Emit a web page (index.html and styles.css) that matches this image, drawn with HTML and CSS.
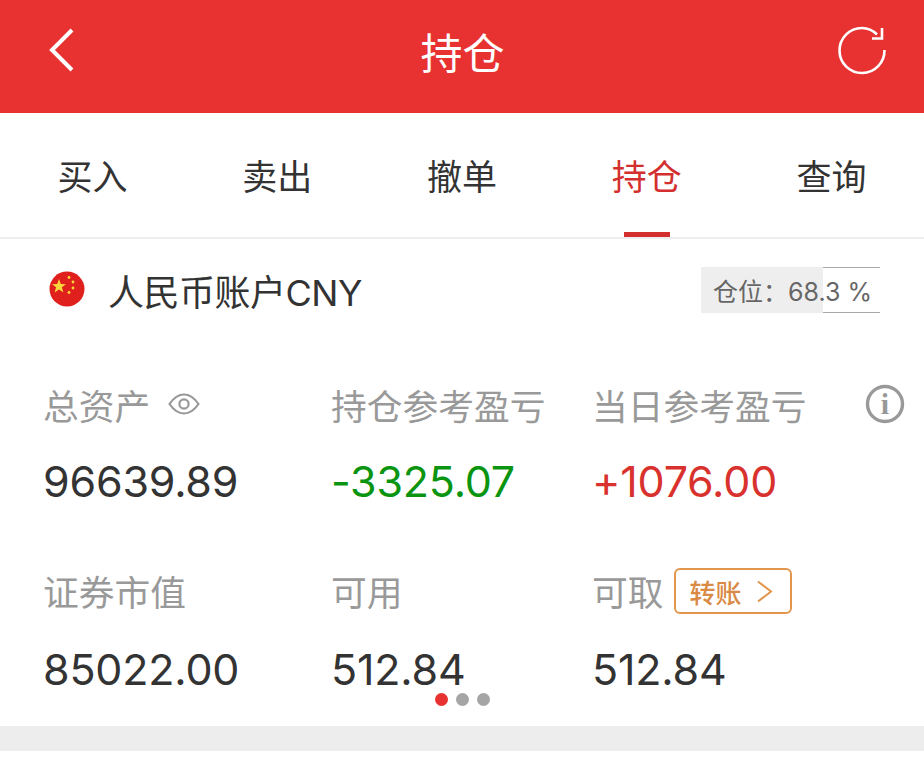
FILE: index.html
```html
<!DOCTYPE html>
<html lang="zh-CN">
<head>
    <meta charset="UTF-8">
    <meta name="viewport" content="width=device-width, initial-scale=1.0">
    <title>持仓</title>
    <link rel="stylesheet" href="styles.css">
</head>
<body>
    <header class="topbar">
        <svg class="back-icon" width="26" height="44" viewBox="0 0 26 44">
            <path d="M23 2 L3 22 L23 42" fill="none" stroke="#fff" stroke-width="4"/>
        </svg>
        <h1 class="topbar-title">持仓</h1>
        <svg class="refresh-icon" width="52" height="52" viewBox="0 0 52 52">
            <path d="M41 9.5 C37 5.5 32 3 26 3 A22.5 22.5 0 1 0 48.5 25" fill="none" stroke="#fff" stroke-width="2.6"/>
            <path d="M46 3 V13.5 H36" fill="none" stroke="#fff" stroke-width="2.6"/>
        </svg>
    </header>

    <nav class="tabs">
        <div class="tab">买入</div>
        <div class="tab">卖出</div>
        <div class="tab">撤单</div>
        <div class="tab tab-active">持仓</div>
        <div class="tab">查询</div>
    </nav>

    <main class="account">
        <div class="account-head">
            <svg class="flag" width="36" height="36" viewBox="0 0 36 36">
                <circle cx="18" cy="18" r="17.5" fill="#e0201c"/>
                <polygon points="10,8 11.8,13 17,13.2 12.9,16.3 14.4,21.4 10,18.4 5.6,21.4 7.1,16.3 3,13.2 8.2,13" fill="#fbd63c"/>
                <circle cx="20" cy="6.5" r="1.4" fill="#fbd63c"/>
                <circle cx="24" cy="11" r="1.4" fill="#fbd63c"/>
                <circle cx="24" cy="17" r="1.4" fill="#fbd63c"/>
                <circle cx="20" cy="21.5" r="1.4" fill="#fbd63c"/>
            </svg>
            <span class="account-name">人民币账户CNY</span>
            <div class="gauge">
                <div class="gauge-fill"></div>
                <span class="gauge-text">仓位：68.3 %</span>
            </div>
        </div>

        <div class="stats">
            <div class="stat">
                <div class="stat-label">总资产
                    <svg class="eye-icon" width="32" height="22" viewBox="0 0 32 22">
                        <path d="M1.5 11 C7 3 12 1.5 16 1.5 C20 1.5 25 3 30.5 11 C25 19 20 20.5 16 20.5 C12 20.5 7 19 1.5 11 Z" fill="none" stroke="#999" stroke-width="2.2"/>
                        <circle cx="16" cy="11" r="4.6" fill="none" stroke="#999" stroke-width="2.2"/>
                    </svg>
                </div>
                <div class="stat-value">96639.89</div>
            </div>
            <div class="stat">
                <div class="stat-label">持仓参考盈亏</div>
                <div class="stat-value value-down">-3325.07</div>
            </div>
            <div class="stat">
                <div class="stat-label">当日参考盈亏</div>
                <div class="stat-value value-up">+1076.00</div>
            </div>
            <div class="stat">
                <div class="stat-label">证券市值</div>
                <div class="stat-value">85022.00</div>
            </div>
            <div class="stat">
                <div class="stat-label">可用</div>
                <div class="stat-value">512.84</div>
            </div>
            <div class="stat">
                <div class="stat-label">可取
                    <span class="transfer">转账
                        <svg width="17" height="23" viewBox="0 0 17 23">
                            <path d="M2 1.5 L15 11.5 L2 21.5" fill="none" stroke="#e2954c" stroke-width="2"/>
                        </svg>
                    </span>
                </div>
                <div class="stat-value">512.84</div>
            </div>
        </div>

        <svg class="info-icon" width="40" height="40" viewBox="0 0 40 40">
            <circle cx="20" cy="20" r="17.5" fill="none" stroke="#999" stroke-width="3.4"/>
            <text x="20" y="30" text-anchor="middle" class="info-i">i</text>
        </svg>

        <div class="dots">
            <span class="dot dot-on"></span>
            <span class="dot"></span>
            <span class="dot"></span>
        </div>
    </main>

    <div class="band"></div>
</body>
</html>
```

FILE: styles.css
```css
* {
    box-sizing: border-box;
}
html, body {
    height: 759px;
    overflow: hidden;
}
body {
    margin: 0;
    background: #fff;
    color: #333;
    font-family: Inter, "Noto Sans CJK SC", sans-serif;
}

.topbar {
    height: 113px;
    background: #e83232;
    display: flex;
    align-items: center;
    justify-content: space-between;
    padding: 0 36px 13px 49px;
}
.topbar-title {
    margin: 8px 0 0 14px;
    color: #fff;
    font-size: 42px;
    font-weight: 400;
    line-height: 56px;
}
.back-icon, .refresh-icon {
    display: block;
}
.refresh-icon {
    margin-top: 2px;
}

.tabs {
    height: 126px;
    display: flex;
    border-bottom: 2px solid #eee;
}
.tab {
    flex: 1;
    text-align: center;
    font-size: 35px;
    line-height: 124px;
    color: #333;
    position: relative;
    padding-top: 2px;
}
.tab-active {
    color: #d32f2f;
}
.tab-active::after {
    content: "";
    position: absolute;
    left: 50%;
    bottom: 0;
    width: 46px;
    height: 5px;
    margin-left: -23px;
    background: #d32f2f;
}

.account {
    height: 487px;
    position: relative;
    padding: 28px 44px 0 49px;
}
.account-head {
    display: flex;
    align-items: center;
    height: 46px;
}
.flag {
    margin-top: -2px;
}
.account-name {
    margin-left: 23px;
    font-size: 36px;
    letter-spacing: -0.5px;
    color: #333;
}
.gauge {
    margin-left: auto;
    width: 179px;
    height: 46px;
    position: relative;
    display: flex;
    align-items: center;
    padding-left: 12px;
    border-top: 1px solid #aaa;
    border-bottom: 1px solid #aaa;
}
.gauge-fill {
    position: absolute;
    left: 0;
    top: -1px;
    bottom: -1px;
    width: 122px;
    background: #eee;
}
.gauge-text {
    position: relative;
    font-size: 25px;
    color: #666;
    white-space: nowrap;
}

.stats {
    display: grid;
    grid-template-columns: 288px 261px 1fr;
    grid-auto-rows: 186px;
    margin: 66px 0 0 -6px;
}
.stat-label {
    display: flex;
    align-items: center;
    height: 50px;
    font-size: 35.75px;
    color: #999;
    white-space: nowrap;
}
.stat-value {
    margin-top: 22px;
    font-size: 43px;
    letter-spacing: -0.2px;
    line-height: 60px;
    color: #333;
}
.stat:nth-child(n+4) .stat-value {
    margin-top: 24px;
}
.value-down {
    color: #0a9410;
}
.value-up {
    color: #d9322e;
}
.eye-icon {
    margin-left: 18px;
}
.transfer {
    display: flex;
    align-items: center;
    gap: 14px;
    margin: 2px 0 0 10px;
    width: 118px;
    height: 46px;
    padding-left: 14px;
    border: 2.5px solid #e2954c;
    border-radius: 6px;
    font-size: 26px;
    font-weight: 500;
    color: #d98a45;
}

.info-icon {
    position: absolute;
    left: 865px;
    top: 145px;
}
.info-i {
    font-family: "Liberation Serif", serif;
    font-size: 30px;
    font-weight: 700;
    fill: #999;
}

.dots {
    position: absolute;
    left: 435px;
    top: 454px;
    display: flex;
    gap: 8px;
}
.dot {
    width: 13px;
    height: 13px;
    border-radius: 50%;
    background: #a5a5a5;
}
.dot-on {
    background: #e83232;
}

.band {
    height: 25px;
    background: #ededed;
}
```
